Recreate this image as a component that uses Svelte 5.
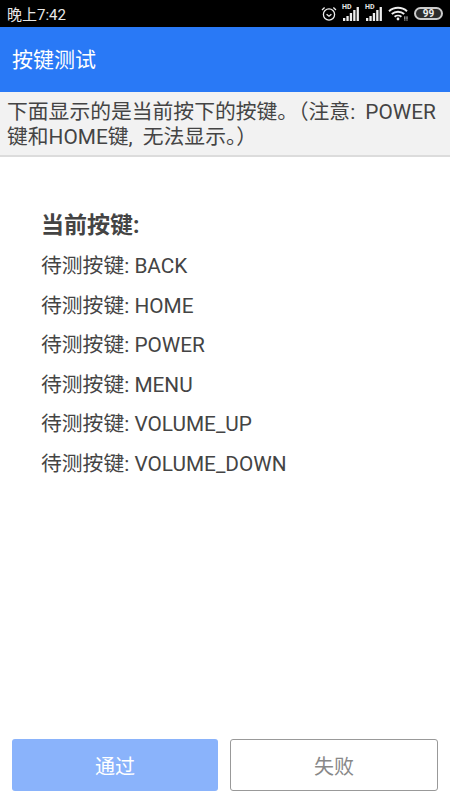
<script>
    const keys = ["BACK", "HOME", "POWER", "MENU", "VOLUME_UP", "VOLUME_DOWN"];
    const bars = [3, 5, 8, 11, 14];
</script>

<div class="screen">
    <div class="status">
        <span class="time">晚上7:42</span>
        <div class="icons">
            <svg width="16" height="16" viewBox="0 0 16 16" fill="none" stroke="#eee" stroke-width="1.3">
                <circle cx="8" cy="8.5" r="5.6" />
                <path d="M5.6 8.2 8 10.2 10.4 8.2" />
                <path d="M1 4 3.6 1.6M15 4 12.4 1.6" />
            </svg>
            {#each [0, 1] as s}
                <div class="signal">
                    <span class="hd">HD</span>
                    <svg width="18" height="15" viewBox="0 0 18 15" fill="#eee">
                        {#each bars as h, i}
                            <rect x={i * 3.4 + 1} y={15 - h} width="2.3" height={h} />
                        {/each}
                    </svg>
                </div>
            {/each}
            <svg class="wifi" width="21" height="15" viewBox="0 0 21 15" fill="none" stroke="#eee" stroke-width="1.9">
                <path d="M1 5.2C6 .6 14 .6 19 5.2" />
                <path d="M3.8 8C7.2 4.9 12.8 4.9 16.2 8" />
                <path d="M6.6 10.8C8.5 9.2 11.5 9.2 13.4 10.8" />
                <circle cx="10" cy="13" r="1.4" fill="#eee" stroke="none" />
                <path d="M16.8 10.5v4M19 10.5v4" stroke-width="1.2" stroke-dasharray="1.2 .6" />
            </svg>
            <div class="battery">99</div>
        </div>
    </div>

    <header>按键测试</header>

    <div class="notice">下面显示的是当前按下的按键。（注意: POWER键和HOME键, 无法显示。）</div>

    <main>
        <h2>当前按键:</h2>
        {#each keys as key}
            <p>待测按键: {key}</p>
        {/each}
    </main>

    <div class="actions">
        <button class="pass">通过</button>
        <button class="fail">失败</button>
    </div>
</div>

<style>
    :global(body) {
        margin: 0;
        background: #fff;
    }

    .screen {
        display: flex;
        flex-direction: column;
        width: 450px;
        height: 800px;
        font-family: Roboto, "Noto Sans CJK SC", sans-serif;
        overflow: hidden;
    }

    .status {
        display: flex;
        align-items: center;
        justify-content: space-between;
        flex: none;
        height: 27px;
        padding: 0 7px;
        box-sizing: border-box;
        background: #000;
        color: #e8e8e8;
        font-size: 15px;
    }

    .icons {
        display: flex;
        align-items: center;
        gap: 5px;
    }

    .signal {
        position: relative;
        display: flex;
    }

    .hd {
        position: absolute;
        top: -3px;
        left: 0;
        font-size: 7px;
        font-weight: 700;
        line-height: 8px;
    }

    .battery {
        width: 25px;
        height: 9px;
        border: 2px solid #ccc;
        border-radius: 7px;
        background: #2c2c2c;
        color: #eee;
        font-size: 10px;
        font-weight: 700;
        line-height: 9px;
        text-align: center;
    }

    header {
        flex: none;
        height: 65px;
        padding: 2px 0 0 12px;
        box-sizing: border-box;
        background: #2979f6;
        color: #fff;
        font-size: 21px;
        line-height: 63px;
    }

    .notice {
        flex: none;
        height: 65px;
        padding: 8px 7px 0;
        box-sizing: border-box;
        background: #f2f2f2;
        border-bottom: 2px solid #dcdcdc;
        color: #444;
        font-size: 20.8px;
        line-height: 25px;
        word-spacing: 5px;
    }

    main {
        flex: 1;
        padding: 53px 41px 0;
        color: #444;
    }

    h2 {
        margin: 0 0 5px;
        font-size: 23px;
        font-weight: 700;
        line-height: 32px;
    }

    p {
        margin: 0;
        font-size: 20.8px;
        line-height: 39.6px;
    }

    .actions {
        display: flex;
        flex: none;
        gap: 12px;
        padding: 0 12px 9px;
    }

    button {
        flex: 1;
        height: 52px;
        padding: 0;
        box-sizing: border-box;
        border-radius: 3px;
        font-family: inherit;
        font-size: 20px;
    }

    .pass {
        border: none;
        background: #8ab3fb;
        color: #fff;
    }

    .fail {
        border: 1px solid #999;
        background: #fff;
        color: #888;
    }
</style>
